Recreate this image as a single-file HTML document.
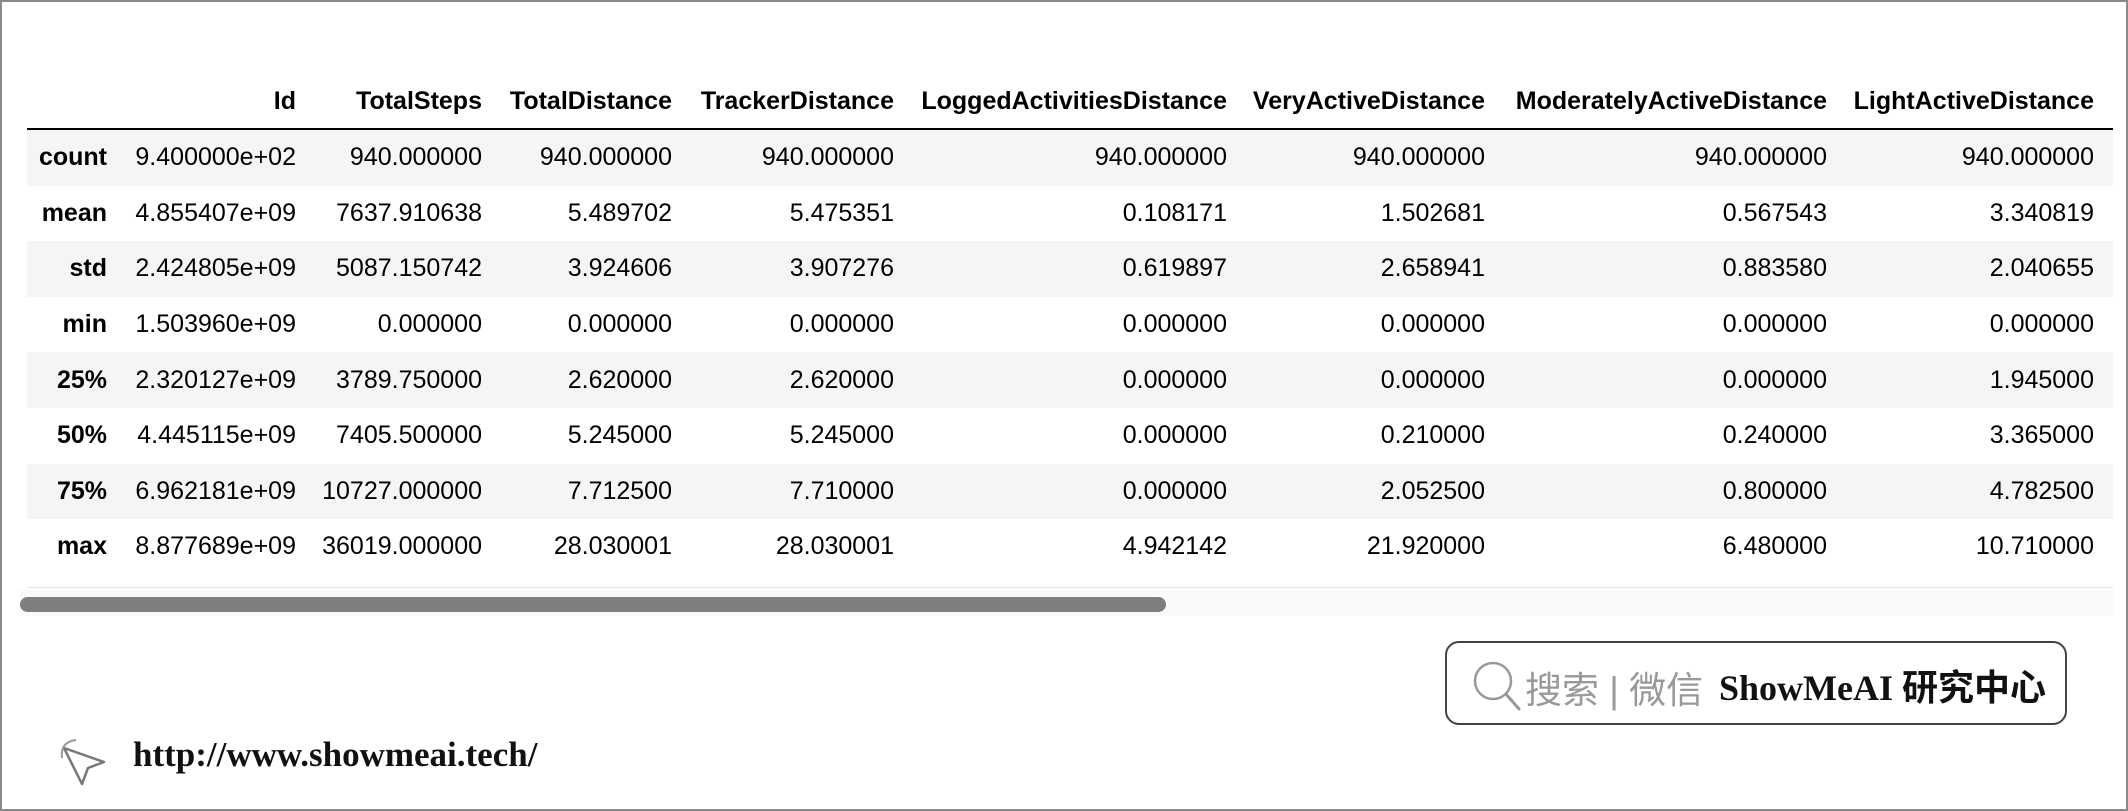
<!DOCTYPE html>
<html><head><meta charset="utf-8"><style>
body{margin:0;width:2128px;height:811px;background:#fff;position:relative;overflow:hidden;font-family:"Liberation Sans",Arial,sans-serif;}
.frame{position:absolute;left:0;top:0;width:2124px;height:807px;border:2px solid #8a8a8a;}
table{position:absolute;left:27px;top:75px;border-collapse:collapse;table-layout:fixed;font-size:25px;color:#000;}
td,th{text-align:right;padding:0 13px 0 0;height:55.6px;white-space:nowrap;}
th{font-weight:bold;height:53px;}
thead tr{border-bottom:2px solid #000;}
tbody tr:nth-child(odd){background:#f5f5f5;}
tbody th{font-weight:bold;}
td:last-child,th:last-child{padding-right:19px;}
.bottomline{position:absolute;left:27px;top:587px;width:2086px;height:1px;background:#e4e4e4;}
.track{position:absolute;left:20px;top:590px;width:2093px;height:26px;background:#fafafa;}
.thumb{position:absolute;left:20px;top:597px;width:1146px;height:15px;border-radius:8px;background:#7f7f7f;}
.search{position:absolute;left:1445px;top:641px;width:622px;height:84px;border:2px solid #444;border-radius:14px;box-sizing:border-box;}
.search .t{position:absolute;left:78px;top:17px;font-size:37px;color:#999;font-family:"Liberation Sans","Noto Sans CJK SC",sans-serif;}
.search .b{position:absolute;left:272px;top:16px;font-size:36px;color:#111;font-weight:bold;font-family:"Liberation Serif","Noto Sans CJK SC",serif;}
.url{position:absolute;left:133px;top:735px;font-size:35px;font-weight:bold;font-family:"Liberation Serif",serif;color:#111;}
</style></head><body>
<div class="frame"></div>
<table>
<colgroup><col style="width:93px"><col style="width:189px"><col style="width:186px"><col style="width:190px"><col style="width:222px"><col style="width:333px"><col style="width:258px"><col style="width:342px"><col style="width:273px"></colgroup>
<thead><tr><th></th><th>Id</th><th>TotalSteps</th><th>TotalDistance</th><th>TrackerDistance</th><th>LoggedActivitiesDistance</th><th>VeryActiveDistance</th><th>ModeratelyActiveDistance</th><th>LightActiveDistance</th></tr></thead>
<tbody>
<tr><th>count</th><td>9.400000e+02</td><td>940.000000</td><td>940.000000</td><td>940.000000</td><td>940.000000</td><td>940.000000</td><td>940.000000</td><td>940.000000</td></tr>
<tr><th>mean</th><td>4.855407e+09</td><td>7637.910638</td><td>5.489702</td><td>5.475351</td><td>0.108171</td><td>1.502681</td><td>0.567543</td><td>3.340819</td></tr>
<tr><th>std</th><td>2.424805e+09</td><td>5087.150742</td><td>3.924606</td><td>3.907276</td><td>0.619897</td><td>2.658941</td><td>0.883580</td><td>2.040655</td></tr>
<tr><th>min</th><td>1.503960e+09</td><td>0.000000</td><td>0.000000</td><td>0.000000</td><td>0.000000</td><td>0.000000</td><td>0.000000</td><td>0.000000</td></tr>
<tr><th>25%</th><td>2.320127e+09</td><td>3789.750000</td><td>2.620000</td><td>2.620000</td><td>0.000000</td><td>0.000000</td><td>0.000000</td><td>1.945000</td></tr>
<tr><th>50%</th><td>4.445115e+09</td><td>7405.500000</td><td>5.245000</td><td>5.245000</td><td>0.000000</td><td>0.210000</td><td>0.240000</td><td>3.365000</td></tr>
<tr><th>75%</th><td>6.962181e+09</td><td>10727.000000</td><td>7.712500</td><td>7.710000</td><td>0.000000</td><td>2.052500</td><td>0.800000</td><td>4.782500</td></tr>
<tr><th>max</th><td>8.877689e+09</td><td>36019.000000</td><td>28.030001</td><td>28.030001</td><td>4.942142</td><td>21.920000</td><td>6.480000</td><td>10.710000</td></tr>
</tbody></table>
<div class="track"></div>
<div class="bottomline"></div>
<div class="thumb"></div>
<div class="search">
<svg style="position:absolute;left:22px;top:14px" width="56" height="56" viewBox="0 0 56 56"><circle cx="24" cy="24" r="18" fill="none" stroke="#999" stroke-width="2.5"/><path d="M37 37 L50 52" stroke="#999" stroke-width="3" stroke-linecap="round"/></svg>
<div class="t">搜索 | 微信</div>
<div class="b">ShowMeAI 研究中心</div>
</div>
<svg style="position:absolute;left:58px;top:736px" width="54" height="54" viewBox="0 0 54 54"><path d="M6 12 L46 26 L30 32 L24 48 Z" fill="none" stroke="#777" stroke-width="2.5" stroke-linejoin="round"/><path d="M4 22 Q2 6 18 4" fill="none" stroke="#999" stroke-width="2"/></svg>
<div class="url">http://www.showmeai.tech/</div>
</body></html>
